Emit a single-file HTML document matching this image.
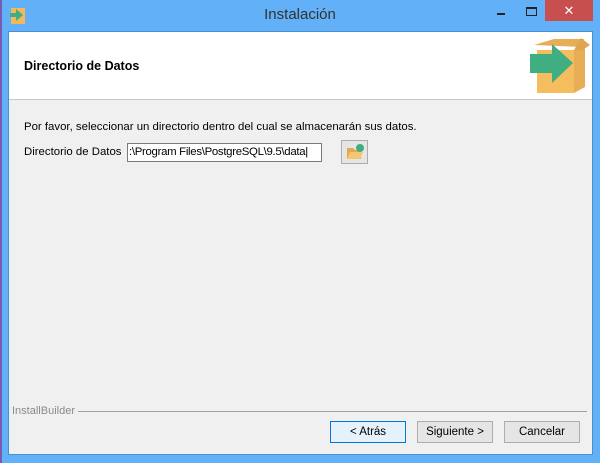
<!DOCTYPE html>
<html><head><style>
body{margin:0;width:600px;height:463px;background:#62b0f7;position:relative;overflow:hidden;font-family:"Liberation Sans",sans-serif;}
.abs{position:absolute}
.client{left:8px;top:31px;width:585px;height:424px;background:#f0f0f0;border:1px solid #4a90d0;box-sizing:border-box}
.hdr{left:9px;top:32px;width:583px;height:67px;background:#fff;border-bottom:1px solid #c8c8c8}
.btn{top:421px;width:76px;height:22px;border:1px solid #adadad;background:#e5e5e5;box-sizing:border-box;font-size:11.5px;text-align:center;line-height:20px;color:#000}
</style></head><body>
<div class="abs" style="left:0;top:0;width:2px;height:463px;background:#7a5ab0"></div>
<svg class="abs" style="left:8px;top:4px" width="20" height="22"><rect x="3" y="4" width="14" height="16" fill="#f4b85c"/><path d="M2 9h6v-4l7 6-7 6v-4H2z" fill="#3fae80"/></svg>
<div class="abs" style="left:0;width:600px;top:6px;text-align:center;font-size:15px;color:#333">Instalación</div>
<div class="abs" style="left:497px;top:13px;width:8px;height:2px;background:#222"></div>
<div class="abs" style="left:526px;top:7px;width:9px;height:6px;border:1px solid #222;border-top-width:2px"></div>
<div class="abs" style="left:545px;top:0;width:48px;height:21px;background:#c7504f;color:#fff;text-align:center;font-size:13px;line-height:21px">✕</div>
<div class="abs client"></div>
<div class="abs hdr"></div>
<div class="abs" style="left:24px;top:59px;font-size:12.5px;font-weight:bold;color:#000">Directorio de Datos</div>
<svg class="abs" style="left:526px;top:36px" width="64" height="60">
<path d="M8 9L28 3h30l-2 8z" fill="#e8ae56"/>
<path d="M11 14h37v43H11z" fill="#f5bd5e"/>
<path d="M48 14l11-7v44l-11 6z" fill="#e8ae56"/>
<path d="M48 14l7-12 9 7-9 6z" fill="#e0a550"/>
<path d="M4 18h22V8l21 19-21 20V37H4z" fill="#3fae80"/>
</svg>
<div class="abs" style="left:24px;top:121px;font-size:11.4px;color:#000;white-space:nowrap">Por favor, seleccionar un directorio dentro del cual se almacenarán sus datos.</div>
<div class="abs" style="left:24px;top:146px;font-size:11.4px;color:#000;white-space:nowrap">Directorio de Datos</div>
<div class="abs" style="left:127px;top:143px;width:195px;height:19px;background:#fff;border:1px solid #7a7a7a;box-sizing:border-box;font-size:11.4px;line-height:17px;padding-left:1px;white-space:nowrap;overflow:hidden;letter-spacing:-0.3px">:\Program Files\PostgreSQL\9.5\data|</div>
<div class="abs" style="left:341px;top:140px;width:27px;height:24px;border:1px solid #adadad;background:#e5e5e5;box-sizing:border-box"></div>
<svg class="abs" style="left:345px;top:143px" width="20" height="18"><path d="M2 5h6l2 2h6v9H2z" fill="#e0a850"/><path d="M2 16l3-7h13l-3 7z" fill="#f5c670"/><circle cx="15" cy="5" r="4" fill="#3fae80"/></svg>
<div class="abs" style="left:12px;top:405px;font-size:11px;color:#8a8a8a">InstallBuilder</div>
<div class="abs" style="left:78px;top:411px;width:509px;height:1px;background:#a0a0a0"></div>
<div class="abs btn" style="left:330px;background:#e5f1fb;border-color:#0078d7">&lt; Atrás</div>
<div class="abs btn" style="left:417px">Siguiente &gt;</div>
<div class="abs btn" style="left:504px">Cancelar</div>
</body></html>
